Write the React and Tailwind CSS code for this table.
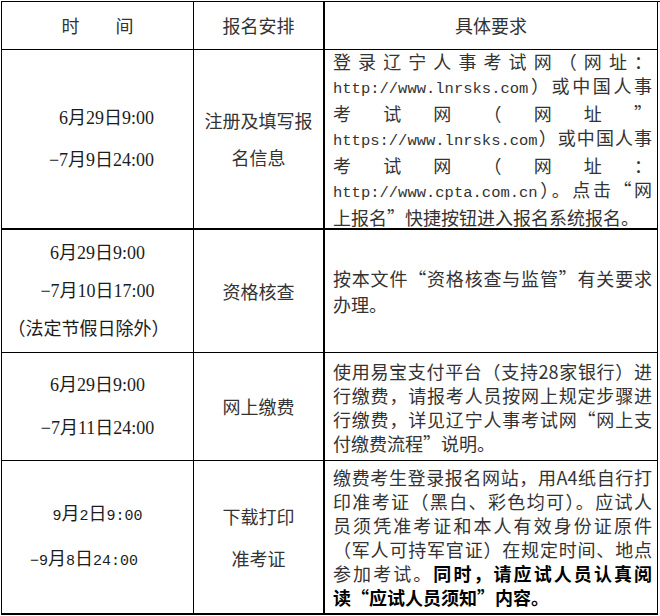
const cjk = { fontFamily: "'Noto Sans CJK SC', sans-serif" }
const dateFont = { fontFamily: "'Liberation Serif', 'Noto Sans CJK SC', serif" }

function Url({ children }) {
  return <span className="text-[15.5px]" style={{ fontFamily: "'Liberation Mono', monospace" }}>{children}</span>
}

// half-width digits, like the Song typeface in the source document
function Num({ children }) {
  return <span className="text-[15px]" style={{ fontFamily: "'Liberation Mono', monospace" }}>{children}</span>
}

// justified line, except the last one of a paragraph
function Line({ children, last = false }) {
  return (
    <div className={last ? 'text-left' : 'text-justify [text-align-last:justify]'}>{children}</div>
  )
}

export default function App() {
  const cell = 'border-r border-b border-black'
  const mid = 'border-r-2 border-b border-black'
  return (
    <div className="w-[660px] h-[616px] bg-white pl-px pt-px text-[18px] text-[#1c1c1c]" lang="zh-CN">
      <div
        className="grid grid-cols-[192px_131px_333px] grid-rows-[48px_180px_123px_108px_154px] border-l border-t border-black"
        style={cjk}
      >
        {/* header */}
        <div className={`${cell} flex items-center justify-center text-[#333]`}>时　　间</div>
        <div className={`${mid} flex items-center justify-center text-[#333]`}>报名安排</div>
        <div className={`${cell} flex items-center justify-center text-[#333]`}>具体要求</div>

        {/* row 1 */}
        <div className={`${cell} !border-b-2 flex flex-col justify-center text-center leading-[42px]`} style={dateFont}>
          <div className="pl-[18px]">6月29日9:00</div>
          <div className="pl-[8px]">−7月9日24:00</div>
        </div>
        <div className={`${mid} !border-b-2 flex flex-col justify-center text-center leading-[37px] text-[#333]`}>
          <div>注册及填写报</div>
          <div>名信息</div>
        </div>
        <div className={`${cell} !border-b-2 flex flex-col justify-center pl-2 pr-[5px] leading-[24px] text-[#333]`}>
          <Line>登录辽宁人事考试网（网址：</Line>
          <Line><Url>http://www.lnrsks.com</Url>）或中国人事</Line>
          <Line>考试网（网址”</Line>
          <Line><Url>https://www.lnrsks.com</Url>）或中国人事</Line>
          <Line>考试网（网址：</Line>
          <Line><Url>http://www.cpta.com.cn</Url>）。点击“网</Line>
          <Line last>上报名”快捷按钮进入报名系统报名。</Line>
        </div>

        {/* row 2 */}
        <div className={`${cell} flex flex-col justify-center text-center leading-[38px]`} style={dateFont}>
          <div>6月29日9:00</div>
          <div>−7月10日17:00</div>
          <div className="pr-[18px]">（法定节假日除外）</div>
        </div>
        <div className={`${mid} flex items-center justify-center text-[#333]`}>资格核查</div>
        <div className={`${cell} flex flex-col justify-center pl-2 pr-[5px] leading-[26px] text-[#333]`}>
          <Line>按本文件“资格核查与监管”有关要求</Line>
          <Line last>办理。</Line>
        </div>

        {/* row 3 */}
        <div className={`${cell} flex flex-col justify-center text-center leading-[43px]`} style={dateFont}>
          <div>6月29日9:00</div>
          <div>−7月11日24:00</div>
        </div>
        <div className={`${mid} flex items-center justify-center text-[#333]`}>网上缴费</div>
        <div className={`${cell} flex flex-col justify-center pl-2 pr-[5px] leading-[24px] text-[#333]`}>
          <Line>使用易宝支付平台（支持28家银行）进</Line>
          <Line>行缴费，请报考人员按网上规定步骤进</Line>
          <Line>行缴费，详见辽宁人事考试网“网上支</Line>
          <Line last>付缴费流程”说明。</Line>
        </div>

        {/* row 4 */}
        <div className={`${cell} !border-b-2 flex flex-col justify-center text-center leading-[41px]`} style={cjk}>
          <div><Num>9</Num>月<Num>2</Num>日<Num>9:00</Num></div>
          <div className="pr-[27px]"><Num>−9</Num>月<Num>8</Num>日<Num>24:00</Num></div>
        </div>
        <div className={`${mid} !border-b-2 flex flex-col justify-center text-center leading-[42px] text-[#333]`}>
          <div>下载打印</div>
          <div>准考证</div>
        </div>
        <div className={`${cell} !border-b-2 flex flex-col justify-center pl-2 pr-[5px] leading-[24px] text-[#333]`}>
          <Line>缴费考生登录报名网站，用A4纸自行打</Line>
          <Line>印准考证（黑白、彩色均可）。应试人</Line>
          <Line>员须凭准考证和本人有效身份证原件</Line>
          <Line>（军人可持军官证）在规定时间、地点</Line>
          <Line>参加考试。<b className="font-bold text-black">同时，请应试人员认真阅</b></Line>
          <Line last><b className="font-bold text-black">读“应试人员须知”内容。</b></Line>
        </div>
      </div>
    </div>
  )
}
